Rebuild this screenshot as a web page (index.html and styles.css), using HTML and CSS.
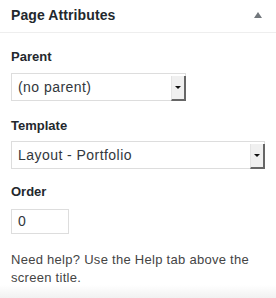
FILE: index.html
```html
<!DOCTYPE html>
<html lang="en">
<head>
    <meta charset="UTF-8">
    <meta name="viewport" content="width=device-width, initial-scale=1.0">
    <title>Page Attributes</title>
    <link rel="stylesheet" href="styles.css">
</head>
<body>
    <div class="postbox">
        <!-- Box header -->
        <div class="postbox-header">
            <h2>Page Attributes</h2>
            <span class="toggle-arrow"></span>
        </div>

        <div class="inside">
            <p class="field-label parent-label">Parent</p>
            <div class="select select-parent">
                <span class="select-value">(no parent)</span>
                <span class="select-btn"><span class="caret"></span></span>
            </div>

            <p class="field-label">Template</p>
            <div class="select select-template">
                <span class="select-value">Layout - Portfolio</span>
                <span class="select-btn"><span class="caret"></span></span>
            </div>

            <p class="field-label order-label">Order</p>
            <div class="order-input">0</div>

            <p class="help">Need help? Use the Help tab above the screen title.</p>
        </div>
    </div>
</body>
</html>
```

FILE: styles.css
```css
/* General Styles */
body {
    margin: 0;
    font-family: "Liberation Sans", Arial, sans-serif;
    color: #23282d;
    background: #fff;
}

.postbox {
    width: 276px;
    min-height: 298px;
    box-sizing: border-box;
    background: linear-gradient(to bottom, #fff 285px, #f1f1f1 298px);
}

/* Header */
.postbox-header {
    display: flex;
    align-items: center;
    justify-content: space-between;
    padding: 6px 14px 7px 11px;
    border-bottom: 1px solid #eee;
}

.postbox-header h2 {
    margin: 0;
    font-size: 14px;
    line-height: 19px;
    font-weight: bold;
    letter-spacing: 0.1px;
}

.toggle-arrow {
    width: 0;
    height: 0;
    border-left: 4px solid transparent;
    border-right: 4px solid transparent;
    border-bottom: 6px solid #72777c;
    margin-top: -1px;
}

/* Fields */
.inside {
    padding: 0 11px;
}

.field-label {
    margin: 16px 0 6px;
    font-size: 13px;
    line-height: 18px;
    font-weight: bold;
}

.parent-label {
    margin-top: 15px;
    margin-bottom: 7px;
}

.order-label {
    margin-top: 14px;
    margin-bottom: 8px;
}

.select {
    display: flex;
    height: 28px;
    box-sizing: border-box;
    border: 1px solid #ddd;
    background: #fff;
}

.select-parent {
    width: 175px;
}

.select-template {
    width: 254px;
}

.select-value {
    flex: 1;
    padding-left: 6px;
    font-size: 14px;
    line-height: 26px;
    letter-spacing: 0.45px;
    color: #32373c;
}

.select-btn {
    display: flex;
    align-items: center;
    justify-content: center;
    width: 12px;
    background: #f0f0f0;
    border-left: 1px solid #e4e4e4;
    border-right: 2px solid #666;
    border-bottom: 2px solid #666;
    margin-top: 2px;
    margin-bottom: -1px;
    margin-right: -1px;
}

.caret {
    width: 0;
    height: 0;
    border-left: 3px solid transparent;
    border-right: 3px solid transparent;
    border-top: 3px solid #111;
}

.order-input {
    width: 58px;
    height: 25px;
    box-sizing: border-box;
    border: 1px solid #ddd;
    padding-left: 6px;
    font-size: 14px;
    line-height: 23px;
    color: #32373c;
}

.help {
    margin: 17px 0 0;
    font-size: 13px;
    line-height: 18px;
    letter-spacing: 0.28px;
    color: #444;
}
```
